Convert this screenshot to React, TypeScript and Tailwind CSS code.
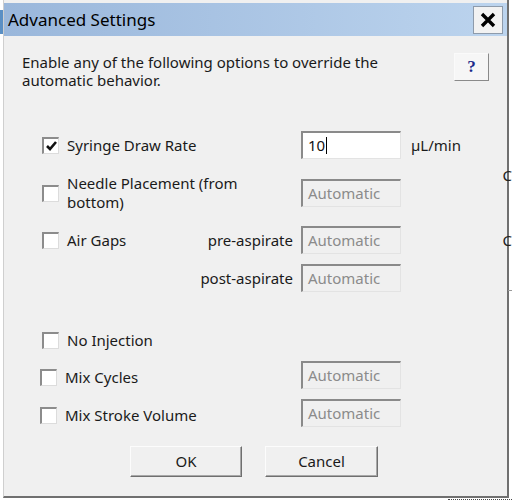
import { useState } from "react";

const font = "font-['Segoe_UI','Noto_Sans','DejaVu_Sans',sans-serif]";

const Checkbox = ({ checked = false }: { checked?: boolean }) => (
  <span className="flex h-[17px] w-[17px] shrink-0 items-center justify-center border-t-2 border-l-2 border-r border-b border-t-[#8c8c8c] border-l-[#8c8c8c] border-r-[#dcdcdc] border-b-[#dcdcdc] bg-white">
    {checked ? (
      <svg width="11" height="10" viewBox="0 0 11 10">
        <path d="M1 5 L4 8 L10 1" fill="none" stroke="#111" strokeWidth="2.6" />
      </svg>
    ) : null}
  </span>
);

const Field = ({ value, disabled = true }: { value: string; disabled?: boolean }) => (
  <div
    className={`flex h-[28px] w-[100px] shrink-0 items-center border-t-2 border-l-2 border-r border-b border-t-[#8a8a8a] border-l-[#8a8a8a] border-r-[#e3e3e3] border-b-[#e3e3e3] pl-[5px] text-[15px] ${
      disabled ? "bg-[#f0f0f0] text-[#8b8b8b]" : "bg-white text-[#111]"
    }`}
  >
    {value}
    {!disabled ? <span className="ml-[1px] inline-block h-[17px] w-px bg-black" /> : null}
  </div>
);

export default function App() {
  const [syringe] = useState(true);

  return (
    <div className={`relative h-[502px] w-[512px] overflow-hidden bg-white ${font}`}>
      {/* bits of the window behind */}
      <div className="absolute left-0 top-[10px] h-[24px] w-[3px] bg-[#5a8fc4]" />
      <div className="absolute right-0 top-[168px] text-[15px] leading-none text-[#222]">C</div>
      <div className="absolute right-0 top-[233px] text-[15px] leading-none text-[#222]">C</div>
      <div className="absolute right-0 top-[290px] h-px w-[4px] bg-[#999]" />
      <div className="absolute bottom-0 left-[448px] h-[3px] w-[64px] border-t border-dotted border-[#444]" />

      <div className="ml-[3px] flex h-[498px] w-[506px] flex-col border-l border-l-[#cfcfcf] border-r-2 border-r-[#707070] border-b-2 border-b-[#707070] bg-[#f0f0f0] text-[15px] text-[#1a1a1a]">
        {/* title bar */}
        <div className="mt-[3px] flex h-[33px] items-center justify-between bg-gradient-to-r from-[#9ab7db] to-[#bcd4ee] pl-[4px] pr-[4px]">
          <span className="text-[17px] text-black">Advanced Settings</span>
          <button className="flex h-[28px] w-[30px] items-center justify-center border border-[#8e9bab] bg-[#f2f2f2]">
            <svg width="16" height="16" viewBox="0 0 16 16">
              <path d="M2 2 L14 14 M14 2 L2 14" stroke="#000" strokeWidth="3.4" />
            </svg>
          </button>
        </div>

        {/* intro */}
        <div className="mt-[17px] flex items-start justify-between pl-[18px] pr-[18px]">
          <p className="leading-[18px]">
            Enable any of the following options to override the
            <br />
            automatic behavior.
          </p>
          <button className="flex h-[28px] w-[35px] items-center justify-center border border-t-[#fafafa] border-l-[#fafafa] border-r-[#8a8a8a] border-b-[#8a8a8a] bg-[#f6f6f6] font-['Liberation_Serif',serif] text-[17px] font-bold text-[#1c2a8a]">
            ?
          </button>
        </div>

        {/* options */}
        <div className="mt-[42px] flex flex-col pl-[38px]">
          <div className="flex h-[28px] items-center">
            <Checkbox checked={syringe} />
            <span className="ml-[8px] w-[234px]">Syringe Draw Rate</span>
            <Field value="10" disabled={false} />
            <span className="ml-[10px]">µL/min</span>
          </div>

          <div className="mt-[20px] flex h-[28px] items-center">
            <Checkbox />
            <span className="ml-[8px] w-[234px] leading-[19px]">
              Needle Placement (from
              <br />
              bottom)
            </span>
            <Field value="Automatic" />
          </div>

          <div className="mt-[19px] flex h-[28px] items-center">
            <Checkbox />
            <span className="ml-[8px] flex w-[234px] justify-between pr-[8px]">
              <span>Air Gaps</span>
              <span>pre-aspirate</span>
            </span>
            <Field value="Automatic" />
          </div>

          <div className="mt-[10px] flex h-[28px] items-center">
            <span className="w-[17px]" />
            <span className="ml-[8px] w-[234px] pr-[8px] text-right">post-aspirate</span>
            <Field value="Automatic" />
          </div>

          <div className="mt-[34px] flex h-[28px] items-center">
            <Checkbox />
            <span className="ml-[8px]">No Injection</span>
          </div>

          <div className="mt-[7px] flex h-[28px] items-center">
            <div className="-ml-[2px] mt-[5px] flex w-[261px] items-center">
              <Checkbox />
              <span className="ml-[8px]">Mix Cycles</span>
            </div>
            <Field value="Automatic" />
          </div>

          <div className="mt-[10px] flex h-[28px] items-center">
            <div className="-ml-[2px] mt-[5px] flex w-[261px] items-center">
              <Checkbox />
              <span className="ml-[8px]">Mix Stroke Volume</span>
            </div>
            <Field value="Automatic" />
          </div>
        </div>

        {/* buttons */}
        <div className="mt-[19px] flex pl-[126px]">
          <button className="h-[31px] w-[112px] border border-t-[#fcfcfc] border-l-[#fcfcfc] border-r-[#6f6f6f] border-b-[#6f6f6f] bg-[#f0f0f0] text-[15px] shadow-[inset_-1px_-1px_0_#a8a8a8]">
            OK
          </button>
          <button className="ml-[23px] h-[31px] w-[113px] border border-t-[#fcfcfc] border-l-[#fcfcfc] border-r-[#6f6f6f] border-b-[#6f6f6f] bg-[#f0f0f0] text-[15px] shadow-[inset_-1px_-1px_0_#a8a8a8]">
            Cancel
          </button>
        </div>
      </div>
    </div>
  );
}
